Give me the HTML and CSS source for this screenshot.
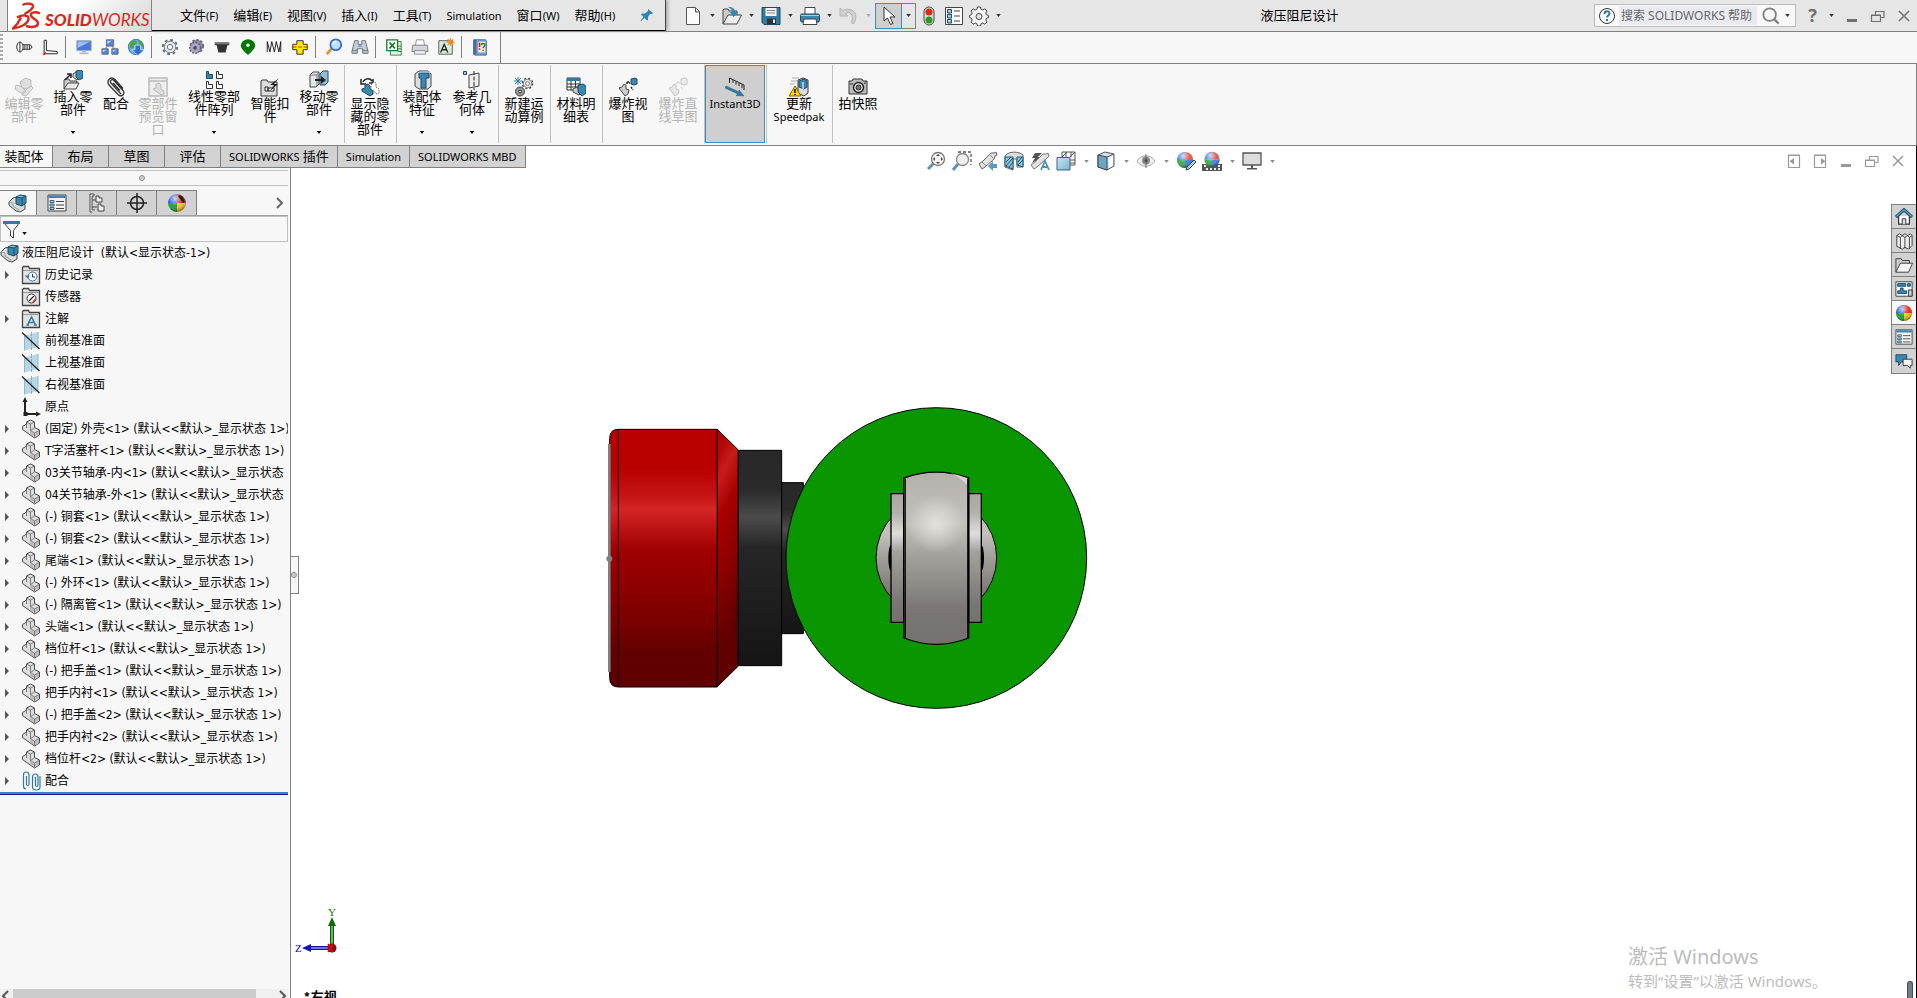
FILE: index.html
```
<!DOCTYPE html>
<html lang="zh-CN">
    <head>
        <meta charset="utf-8">
        <title>液压阻尼设计</title>
        <link rel="stylesheet" href="styles.css">
    </head>
    <body>
        <!-- shared icons -->
        <svg class="defs" aria-hidden="true">
            <defs>
                <linearGradient id="sky" x1="0" y1="0" x2="1" y2="1"><stop offset="0" stop-color="#cfe6f2"/><stop offset="1" stop-color="#7fb2cc"/></linearGradient>
                <radialGradient id="shine" cx=".4" cy=".25" r=".7"><stop offset="0" stop-color="#fff" stop-opacity=".75"/><stop offset=".6" stop-color="#fff" stop-opacity="0"/><stop offset="1" stop-color="#000" stop-opacity=".35"/></radialGradient>
            </defs>
            <symbol id="part" viewBox="0 0 20 20">
                <path d="M1.500 7.500l4-2.500V3l4-2 4 2v5.500l5 2.500v5l-5 3-12-8.500z" fill="#dedede" stroke="#4a4a4a" stroke-linejoin="round"/>
                <path d="M6 4l3.500 2v6l4 2.500L18 11.500V16l-4.500 2.500L9 15V6.500z" fill="#bdbdbd"/>
                <path d="M5.500 3l4 2 4-2M9.500 5v6.500l4 2.500 4.500-2.500M9.500 11.500l4-2.500M13.500 14v4.500M5.500 5v4" fill="none" stroke="#6a6a6a" stroke-width=".8"/>
            </symbol>
            <symbol id="asm" viewBox="0 0 20 20">
                <path d="M1 9l4-4 4-1 8 8v4l-5 3-4-1-7-6z" fill="#dcdcdc" stroke="#444"/>
                <path d="M1 9l4 1v3l6 4v2" fill="none" stroke="#999"/>
                <path d="M8 4l4-2 6 1v7l-4 3-6-2z" fill="#3a87b0" stroke="#1c4a63"/>
                <path d="M9 4l3-1 4 .6-2 1z" fill="#9fd0e8"/>
                <path d="M8 4l6 1 4-2M14 5v8" fill="none" stroke="#1c4a63"/>
            </symbol>
            <symbol id="plane" viewBox="0 0 20 20">
                <path d="M3.500 4.500L17 1v15L3.500 19.500z" fill="#b5d8e7"/>
                <path d="M3.500 4.500v15M17 1v15" stroke="#8fb9cb" fill="none"/>
                <path d="M10.500 1v18" stroke="#8a9aa2" stroke-dasharray="4 1" stroke-width=".8"/>
                <path d="M1 1.500L18.500 18" stroke="#222" stroke-width="1.300"/>
            </symbol>
            <symbol id="folder" viewBox="0 0 20 20">
                <path d="M1.500 18.500V2.500l1-1h5l1 2h10v15z" fill="#e2e2e2" stroke="#444" stroke-width="1.300"/>
                <path d="M2 5.500h16" stroke="#999"/>
            </symbol>
            <symbol id="caret" viewBox="0 0 6 4"><path d="M0 0h6L3 4z" fill="currentColor"/></symbol>
            <symbol id="ball" viewBox="0 0 20 20">
                <path d="M10 10V1a9 9 0 0 0-9 9z" fill="#2e5fd0"/>
                <path d="M10 10V1a9 9 0 0 1 9 9z" fill="#e03020"/>
                <path d="M10 10H1a9 9 0 0 0 9 9z" fill="#1fa03a"/>
                <path d="M10 10h9a9 9 0 0 1-9 9z" fill="#f2c81e"/>
                <circle cx="10" cy="10" r="9" fill="url(#shine)"/>
            </symbol>
            <symbol id="scene" viewBox="0 0 20 20">
                <path d="M10 10V1a9 9 0 0 0-9 9z" fill="#4a80e0"/>
                <path d="M10 10V1a9 9 0 0 1 9 9z" fill="#e05a50"/>
                <path d="M10 10H1a9 9 0 0 0 9 9z" fill="#3cae50"/>
                <path d="M10 10h9a9 9 0 0 1-9 9z" fill="#4a80e0"/>
                <circle cx="10" cy="10" r="9" fill="url(#shine)"/>
            </symbol>
            <symbol id="gear" viewBox="0 0 20 20">
                <circle cx="10" cy="10" r="8" fill="none" stroke="currentColor" stroke-width="2" stroke-dasharray="3.140 3.140"/>
                <circle cx="10" cy="10" r="6.500" fill="#e8e8e8" stroke="currentColor"/>
                <circle cx="10" cy="10" r="3" fill="#f7f7f7" stroke="currentColor"/>
            </symbol>
            <symbol id="list" viewBox="0 0 20 20">
                <path d="M1 2h18v16H1z" fill="#f4f4f4" stroke="#444"/>
                <path d="M1.500 2.500h17v2.500h-17z" fill="#3a87b0"/>
                <path d="M3 7.500h4v2H3zM3 11h4v2H3zM3 14.500h4v2H3z" fill="#9fd0e8" stroke="#1c4a63" stroke-width=".8"/>
                <path d="M9 8.500h8M9 12h8M9 15.500h8" stroke="#444"/>
            </symbol>
            <symbol id="min" viewBox="0 0 20 20"><path d="M5 13h10v3H5z" fill="currentColor"/></symbol>
            <symbol id="restore" viewBox="0 0 20 20"><path d="M7.500 9V5.500h8.500v6H12.500M7 5.500h9M3.500 9.500h9v6h-9zM3 9h10" fill="none" stroke="currentColor" stroke-width="1.200"/></symbol>
            <symbol id="close" viewBox="0 0 20 20"><path d="M5 5l10 10M15 5L5 15" stroke="currentColor" stroke-width="1.500"/></symbol>
        </svg>

        <header class="titlebar">
            <div class="brand">
                <svg class="ds" viewBox="0 0 30 28"><path d="M10.500 3c4-2 11-2 10.500 1.500-.5 3-4 5-8.500 7.500M5 15.500c5-3 12-3 11.500 1.500-.5 5-8 8.500-15.500 9.500 3.500-3 6-6.500 8-11M28 11.500c-4-2-9.500-1.500-9 2 .5 3 7.500 4.500 7 8-.5 4-7 4-12 2.500" fill="none" stroke="#da291c" stroke-width="2.400"/></svg>
                <span class="name"><b>SOLID</b>WORKS</span>
            </div>
            <nav class="menu">
                <a href="#">文件<span>(F)</span></a>
                <a href="#">编辑<span>(E)</span></a>
                <a href="#">视图<span>(V)</span></a>
                <a href="#">插入<span>(I)</span></a>
                <a href="#">工具<span>(T)</span></a>
                <a href="#"><span>Simulation</span></a>
                <a href="#">窗口<span>(W)</span></a>
                <a href="#">帮助<span>(H)</span></a>
                <button class="pin" aria-label="固定"><svg viewBox="0 0 14 14"><path d="M8 1l5 4-1 1h-2L8 9v3l-1 .5L4.500 10 1 13l-.5-.5L3.500 9 1 6.500 2 5.500h3L8 3z" fill="#2f86b5"/></svg></button>
            </nav>
            <div class="quick">
                <button aria-label="新建"><svg viewBox="0 0 20 20"><path d="M3.500 1.500h9l4 4v13h-13z" fill="#fbfbfb" stroke="#555"/><path d="M12.500 1.500v4.500h4" fill="#ddd" stroke="#555"/></svg></button>
                <button class="arrow" aria-label="更多"><svg><use href="#caret"/></svg></button>
                <button aria-label="打开"><svg viewBox="0 0 20 20"><path d="M1 18V4l1-1h4l1 2h8v4" fill="#ccc" stroke="#444"/><path d="M1 18l5-9h13.500L15 18z" fill="#eee" stroke="#444"/><path d="M6 1c5 0 7 2 7 5h3l-4.500 5L8 6h2.500C10.500 4 9 2.500 6 1z" fill="#2f86b5"/></svg></button>
                <button class="arrow" aria-label="更多"><svg><use href="#caret"/></svg></button>
                <button aria-label="保存"><svg viewBox="0 0 20 20"><path d="M1 1.500h18v17H3l-2-2z" fill="#2f7ba3" stroke="#1c4a63"/><path d="M4.500 2h11v8h-11z" fill="#f3f3f3"/><path d="M6 4.500h8M6 7h8" stroke="#888"/><path d="M6 12.500h9V18H6z" fill="#333"/><path d="M12 13.500h2V17h-2z" fill="#eee"/></svg></button>
                <button class="arrow" aria-label="更多"><svg><use href="#caret"/></svg></button>
                <button aria-label="打印"><svg viewBox="0 0 20 20"><path d="M5 8V1.500h10V8" fill="#fff" stroke="#444"/><rect x=".5" y="8" width="19" height="8" rx="1.500" fill="#3a87b0" stroke="#1c4a63"/><path d="M1 9.500h18" stroke="#9fd0e8"/><path d="M4 13h12l1 5.500H3z" fill="#fff" stroke="#444"/></svg></button>
                <button class="arrow" aria-label="更多"><svg><use href="#caret"/></svg></button>
                <button disabled aria-label="撤销"><svg viewBox="0 0 20 20"><path d="M1 2v8h8L6.500 7.500C11 5 15 8 12.500 17l2 1C21 8 13 0 4 4.500z" fill="#d0d0d0" stroke="#b4b4b4"/></svg></button>
                <button class="arrow" disabled aria-label="更多"><svg><use href="#caret"/></svg></button>
                <span class="split">
                    <button aria-label="选择"><svg viewBox="0 0 20 20"><path d="M5 1v14l3.500-3 3 6.500 2.500-1-3-6.500H16z" fill="#fff" stroke="#333"/></svg></button><button class="arrow" aria-label="更多"><svg><use href="#caret"/></svg></button>
                </span>
                <button aria-label="重建模型"><svg viewBox="0 0 20 20"><rect x="5" y="1" width="10" height="18" rx="5" fill="#ddd" stroke="#444"/><circle cx="10" cy="6" r="3.500" fill="#e02a10"/><circle cx="10" cy="14" r="3.500" fill="#2c9a22"/></svg></button>
                <button aria-label="文件属性"><svg viewBox="0 0 20 20"><path d="M1.500 1.500h17v17h-17z" fill="#fafafa" stroke="#444"/><path d="M3.500 3.500h4V7h-4zM3.500 8.500h4V12h-4zM3.500 13.500h4V17h-4z" fill="#9fd0e8" stroke="#1c4a63"/><path d="M10 5h6M10 10h6M10 15h6" stroke="#444"/></svg></button>
                <button aria-label="选项"><svg viewBox="0 0 20 20"><path d="M8.500 1h3l.6 2.300 1.700.7 2-1.200 2.200 2.200-1.200 2 .7 1.700 2 .8v2l-2 .8-.7 1.700 1.200 2-2.200 2.200-2-1.200-1.700.7-.6 2.300h-3l-.6-2.300-1.700-.7-2 1.200L2 16l1.200-2-.7-1.700-2-.8v-2l2-.8L3.200 7 2 5l2.200-2.200 2 1.200 1.700-.7z" fill="#f4f4f4" stroke="#444"/><circle cx="10" cy="10.500" r="3" fill="#e6e6e6" stroke="#444"/></svg></button>
                <button class="arrow" aria-label="更多"><svg><use href="#caret"/></svg></button>
            </div>
            <h1>液压阻尼设计</h1>
            <form class="search">
                <svg class="help" viewBox="0 0 20 20"><circle cx="10" cy="10" r="7.500" fill="#fff" stroke="#333"/><path d="M7.500 8c0-3.500 5-3.500 5-.5 0 2-2.500 2-2.500 4M10 13v2" fill="none" stroke="#2f7ba3" stroke-width="2"/></svg>
                <input type="text" placeholder="搜索 SOLIDWORKS 帮助" aria-label="搜索 SOLIDWORKS 帮助">
                <button type="button" class="glass" aria-label="搜索"><svg viewBox="0 0 20 20"><circle cx="8.500" cy="8.500" r="7" fill="none" stroke="#808080" stroke-width="2"/><path d="M13.500 13.500l5 5" stroke="#808080" stroke-width="2.500"/></svg></button>
                <button type="button" class="arrow" aria-label="更多"><svg><use href="#caret"/></svg></button>
            </form>
            <div class="winbtns">
                <button class="q" aria-label="帮助">?</button>
                <button class="arrow" aria-label="更多"><svg><use href="#caret"/></svg></button>
                <button aria-label="最小化"><svg><use href="#min"/></svg></button>
                <button aria-label="还原"><svg><use href="#restore"/></svg></button>
                <button aria-label="关闭"><svg><use href="#close"/></svg></button>
            </div>
        </header>

        <div class="tools">
            <div class="strip">
                <i class="grip"></i>
                <button aria-label="螺栓"><svg viewBox="0 0 20 20"><path d="M8 7.500h9l2 2.500-2 2.500H8" fill="#fff" stroke="#111"/><ellipse cx="5.500" cy="10" rx="3.500" ry="5.500" fill="#fff" stroke="#111"/><path d="M5.500 5v10M11 8v4M13.500 8v4M16 8v4" stroke="#111"/></svg></button>
                <button aria-label="折弯"><svg viewBox="0 0 20 20"><path d="M3.500 2.500H6V14l12 1v2.500H3.500z" fill="#fff" stroke="#111"/><path d="M2.500 19l3-3" stroke="red" stroke-width="1.500"/></svg></button>
                <i class="sep"></i>
                <button aria-label="显示器"><svg viewBox="0 0 20 20"><path d="M2 3h16v11H2z" fill="#4a78d8" stroke="#9ab"/><path d="M3 4h14L3 11z" fill="#9cc0f5"/><path d="M8 14h4v2h3v2H5v-2h3z" fill="#b8bcc8"/></svg></button>
                <button aria-label="网络"><svg viewBox="0 0 20 20"><path d="M7 9L4 13M12 9l4 4" stroke="#c8a040" stroke-width="1.500"/><path d="M6 2h8v7H6zM1 12h7v6H1zM12 12h7v6h-7z" fill="#4a84dc" stroke="#667"/><path d="M7 3h5L7 7zM2 13h4l-4 3zM13 13h4l-4 3z" fill="#b6d4f8"/></svg></button>
                <button aria-label="下载"><svg viewBox="0 0 20 20"><circle cx="10" cy="10" r="8.500" fill="#6fb0ea" stroke="#3b6fae"/><path d="M3 6c3-4 8-4 8-1s-3 2-3 4-3 4-5 2zM12 2c4 1 7 5 6 8l-4-2z" fill="#4aa648"/><path d="M9 8h6v5h4l-7 6.500L5.500 13H9z" fill="#2f6fd6" stroke="#fff" stroke-width=".6"/></svg></button>
                <i class="sep"></i>
                <button class="c-steel" aria-label="齿轮"><svg><use href="#gear"/></svg></button>
                <button aria-label="斜齿轮"><svg viewBox="0 0 20 20"><circle cx="11" cy="9" r="7" fill="#8d8aa6" stroke="#66637e" stroke-width="2" stroke-dasharray="2.500 2"/><circle cx="9" cy="11" r="6" fill="#a9a6bf" stroke="#5c5975" stroke-dasharray="2 1.500" stroke-width="1.500"/><circle cx="9" cy="11" r="2" fill="#4a4860"/></svg></button>
                <button aria-label="凸台"><svg viewBox="0 0 20 20"><path d="M2 5h16v3h-2l-2 8H6L4 8H2z" fill="#333"/><path d="M2 5h16v2H2z" fill="#777"/></svg></button>
                <button aria-label="凸轮"><svg viewBox="0 0 20 20"><path d="M10 19C5 14 2 11 2 8.500a8 7 0 0 1 16 0C18 11 15 14 10 19z" fill="#007800"/><circle cx="10" cy="8" r="2" fill="#fff"/></svg></button>
                <button aria-label="弹簧"><svg viewBox="0 0 20 20"><path d="M2.500 15.500V4l3 11.500 2-11.500 3 11.500 2-11.500 3 11.500L17.500 4v11.500" fill="none" stroke="#111"/></svg></button>
                <button aria-label="连接件"><svg viewBox="0 0 20 20"><path d="M6.500 3h7v4H18v6h-4.500v5h-7v-5H2V7h4.500z" fill="#ffe800" stroke="#222"/><path d="M1 10h5M8 10h4M14 10h5" stroke="#d02000"/></svg></button>
                <i class="sep"></i>
                <button aria-label="查找"><svg viewBox="0 0 20 20"><path d="M7 12l-5 6" stroke="#e09030" stroke-width="3"/><circle cx="12" cy="7.500" r="6" fill="#bfe0fb" stroke="#2f6fd0" stroke-width="2"/><path d="M8.500 7a4 4 0 0 1 4-3" stroke="#fff" stroke-width="1.500" fill="none"/></svg></button>
                <button aria-label="望远镜"><svg viewBox="0 0 20 20"><path d="M4 3h4v4h4V3h4l3 12v2h-6v-5H7v5H1v-2z" fill="#c3ccd6" stroke="#5d6c7c"/><path d="M1 14h6M13 14h6M8 9h4" stroke="#5d6c7c"/></svg></button>
                <i class="sep"></i>
                <button aria-label="Excel"><svg viewBox="0 0 20 20"><path d="M6 4h12v15H6z" fill="#e8f3e8" stroke="#2a7a36"/><path d="M14 9h4M14 12h4M14 15h4" stroke="#2a7a36"/><path d="M2 2h12v12H2z" fill="#fff" stroke="#1f7a30" stroke-width="1.500"/><path d="M5 5l6 6.500M11 5l-6 6.500" stroke="#1f7a30" stroke-width="2"/></svg></button>
                <button aria-label="打印机"><svg viewBox="0 0 20 20"><path d="M5 8l1-6h8l1 6" fill="#fff" stroke="#888"/><path d="M2 8h16l1 7H1z" fill="#d4d6dc" stroke="#777"/><path d="M4 14h12v4H4z" fill="#eef" stroke="#888"/></svg></button>
                <button aria-label="新建注释"><svg viewBox="0 0 20 20"><path d="M2 3h15v15H2z" fill="#d6ecdf" stroke="#555"/><path d="M4 16L8 7l4 9M5.500 13h5" fill="none" stroke="#222" stroke-width="1.500"/><path d="M15 0v9M10.500 4.500h9M12 1.500l6 6M18 1.500l-6 6" stroke="#f08a18" stroke-width="1.300"/></svg></button>
                <i class="sep"></i>
                <button aria-label="帮助手册"><svg viewBox="0 0 20 20"><path d="M3 2h13l1 1v16H4l-1-1z" fill="#7ca3d0" stroke="#3f5f8c"/><path d="M3 2h3v16H3z" fill="#456a9c"/><path d="M8 4h8v12H8z" fill="#f4ecd0"/><path d="M9.500 5v5M9.500 11.500v1.500" stroke="#d02010" stroke-width="1.800"/><path d="M11.500 8c0-2.500 4-2.500 4 0 0 1.500-2 1.500-2 3.500M13.500 13v1.500" stroke="#1c8040" stroke-width="1.500" fill="none"/></svg></button>
            </div>
        </div>

        <section class="ribbon">
            <div class="group">
                <button class="mid low" disabled><svg viewBox="0 0 20 20"><path d="M6 5l5-4 6 2v6l-4 3-5-1z" fill="#ddd" stroke="#bbb"/><path d="M2 8l4 1 6 5-3 3-8-5zM12 19l-4-1 1-3 8-6 2 2z" fill="#e4e4e4" stroke="#bbb"/></svg>编辑零<br>部件</button>
                <button><svg viewBox="0 0 20 20"><path d="M1 19v-9l1-1h4l1 2h7v3" fill="#ccc" stroke="#444"/><path d="M1 19l4-6h11l-3 6z" fill="#eee" stroke="#444"/><path d="M2 10L7 5M4 4h4v4" fill="none" stroke="#222" stroke-width="1.500"/><path d="M10 4l3-2 3 5-2 3-4-3z" fill="#ddd" stroke="#444"/><path d="M13 1l5-1 2 2v6l-4 2-3-3z" fill="#3a87b0" stroke="#1c4a63"/></svg>插入零<br>部件<i><svg><use href="#caret"/></svg></i></button>
                <button class="narrow low"><svg viewBox="0 0 20 20"><path d="M15 17L5 6c-2-2 1-4.500 3-2.500l9 10c3 4-2 7-5 4L3 8C0 3 5-1 9 2.500l8 9M14 13.500L7 6" fill="none" stroke="#333" stroke-width="1.300"/></svg>配合</button>
                <button class="mid low" disabled><svg viewBox="0 0 20 20"><path d="M1 1h18v18H1z" fill="#eee" stroke="#bbb" stroke-width="1.500"/><path d="M1 4h18" stroke="#bbb" stroke-width="1.500"/><path d="M5 12l3-1V7l3-1 2 2v4l3 2v3l-3 1z" fill="#ddd" stroke="#bbb"/></svg>零部件<br>预览窗<br>口</button>
                <button class="wide"><svg viewBox="0 0 20 20"><path d="M2.500 1.500h2v3h4v4h-6z" fill="#3a87b0" stroke="#1c4a63"/><path d="M12.500 1.500h2v3h4v4h-6zM2.500 11.500h2v3h4v4h-6zM12.500 11.500h2v3h4v4h-6z" fill="#fff" stroke="#333"/></svg>线性零部<br>件阵列<i><svg><use href="#caret"/></svg></i></button>
                <button class="mid low"><svg viewBox="0 0 20 20"><path d="M1 19V4l1-1h5l1 2h9v14z" fill="#ddd" stroke="#333"/><path d="M5 10h3v4H5zM8 11h6v3H8z" fill="#fff" stroke="#222"/><path d="M19 1l-9 7h4l-4 6 8-7h-4z" fill="#222"/></svg>智能扣<br>件</button>
                <button><svg viewBox="0 0 20 20"><path d="M1 5l3-3h6v12l-3 3H1z" fill="#e4e4e4" stroke="#444"/><path d="M1 5h7l2-3M8 5v11" fill="none" stroke="#777"/><path d="M11 4l3-3h5v11l-3 3h-5z" fill="#8fc0d8" stroke="#1c4a63"/><path d="M6 10h7" stroke="#222" stroke-width="2"/><path d="M12 6l5 4-5 4z" fill="#222"/></svg>移动零<br>部件<i><svg><use href="#caret"/></svg></i></button>
            </div>
            <div class="group">
                <button class="low"><svg viewBox="0 0 20 20"><path d="M3 5C5 1 10 1 12 4M1 2v5h5M13 2v4H9" fill="none" stroke="#222" stroke-width="1.500"/><path d="M2 12l3-1V8l3-1 2 2v3l3 2v3l-3 2-8-5z" fill="#3a87b0" stroke="#1c4a63"/><path d="M11 8l3-3 2 1v4l3 2v4l-3 1-2-3-3-2z" fill="#fff" stroke="#666" stroke-dasharray="1.500 1"/></svg>显示隐<br>藏的零<br>部件</button>
            </div>
            <div class="group">
                <button><svg viewBox="0 0 20 20"><path d="M3 4l4-3h9l3 3v12l-3 3H7l-4-3z" fill="#ddd" stroke="#444"/><path d="M7 3h10v5h-3v10H9V8H7z" fill="#3a87b0" stroke="#1c4a63"/><path d="M7 3l2-1h9l-1 1" stroke="#9fd0e8" fill="none"/></svg>装配体<br>特征<i><svg><use href="#caret"/></svg></i></button>
                <button><svg viewBox="0 0 20 20"><path d="M1.500 1.500h3v3h-3z" fill="#9fd0e8" stroke="#1c4a63"/><path d="M7 5l10-2v13L7 18z" fill="#f0f0f0" stroke="#444"/><path d="M12 1v19" stroke="#222" stroke-dasharray="4 1.500"/></svg>参考几<br>何体<i><svg><use href="#caret"/></svg></i></button>
            </div>
            <div class="group">
                <button class="low"><svg class="c-dark" viewBox="0 0 20 20"><path d="M4 0v8M0 4h8M1 1l6 6M7 1L1 7" stroke="#2f7ba3"/><use href="#gear" x="7" y="0" width="13" height="13"/><circle cx="6" cy="14.500" r="4.500" fill="#999" stroke="#444"/><circle cx="6" cy="14.500" r="1.500" fill="#ddd" stroke="#333"/></svg>新建运<br>动算例</button>
            </div>
            <div class="group">
                <button class="low"><svg viewBox="0 0 20 20"><path d="M1 1h13v12H1z" fill="#fff" stroke="#333"/><path d="M1 1h13v3H1z" fill="#2f7ba3"/><path d="M1 7h13M1 10h13M5 4v9M9.500 4v9" stroke="#333"/><path d="M7 12l4-2 4 6-2 2-6-3z" fill="#ccc" stroke="#444"/><path d="M12 8l5-1 3 2v7l-4 3-4-4z" fill="#3a87b0" stroke="#1c4a63"/></svg>材料明<br>细表</button>
            </div>
            <div class="group">
                <button class="low"><svg viewBox="0 0 20 20"><path d="M1 11l3-1 2-3 2 1v4l3 1-1 4-3 2z" fill="#ccc" stroke="#444"/><path d="M13 2l4-1 2 1v5l-3 1-3-1z" fill="#3a87b0" stroke="#1c4a63"/><path d="M8 6h4M13 10l2 3M10 4v2" stroke="#222" stroke-dasharray="2 1" stroke-width="1.500"/></svg>爆炸视<br>图</button>
                <button class="low" disabled><svg viewBox="0 0 20 20"><path d="M1 11l3-1 2-3 2 1v4l3 1-1 4-3 2z" fill="#e8e8e8" stroke="#c4c4c4"/><path d="M13 2l4-1 2 1v5l-3 1-3-1z" fill="#eee" stroke="#c4c4c4"/><path d="M8 6h4M13 10l2 3M10 4v2" stroke="#c4c4c4" stroke-dasharray="2 1"/></svg>爆炸直<br>线草图</button>
            </div>
            <div class="group">
                <button class="low active"><svg viewBox="0 0 20 20"><path d="M4.500 6V1L19 8v5M8 3v3M11 4.500v3M14 6v3M17 7.500V11" fill="none" stroke="#222"/><path d="M1 9l13 6v-2l5 6-8-.5 2-1.500L0 11z" fill="#2f7ba3" stroke="#1c5a7d" stroke-width=".5"/></svg><span class="en">Instant3D</span></button>
            </div>
            <div class="group">
                <button class="low wide"><svg viewBox="0 0 20 20"><path d="M3 1h7M2 4h6M1 7h5" stroke="#aaa"/><path d="M9 3l5-2 5 2v13l-4 3-6-3z" fill="#ddd" stroke="#333"/><path d="M10 4l5-2 3 2v6l-3 2-5-2z" fill="#3a87b0" stroke="#1c4a63"/><path d="M14 5v7" stroke="#fff"/><path d="M6 9l6 10H0z" fill="#ffd400" stroke="#8a5a00"/><path d="M6 12v4M6 17v1.200" stroke="#111" stroke-width="1.500"/></svg>更新<br><span class="en">Speedpak</span></button>
            </div>
            <div class="group">
                <button class="low"><svg viewBox="0 0 20 20"><path d="M1 4h3l1-2h9l1 2h4v13H1z" fill="#bbb" stroke="#333"/><path d="M2 7h3M16 6h2" stroke="#333"/><circle cx="10.500" cy="10.500" r="5" fill="#eee" stroke="#222" stroke-width="1.500"/><circle cx="10.500" cy="10.500" r="2.500" fill="#777" stroke="#222"/></svg>拍快照</button>
            </div>
        </section>

        <main>
            <nav class="tabs">
                <a class="on" href="#">装配体</a>
                <a href="#">布局</a>
                <a href="#">草图</a>
                <a href="#">评估</a>
                <a href="#"><span class="en">SOLIDWORKS</span> 插件</a>
                <a href="#"><span class="en">Simulation</span></a>
                <a href="#"><span class="en">SOLIDWORKS MBD</span></a>
            </nav>

            <aside class="panel">
                <div class="drag"><i class="dot"></i></div>
                <div class="ptabs">
                    <button class="on" aria-label="设计树"><svg><use href="#asm"/></svg></button>
                    <button aria-label="属性"><svg><use href="#list"/></svg></button>
                    <button aria-label="配置"><svg viewBox="0 0 20 20"><path d="M5.500 19H3V1h4v2H5v14h3" fill="#fff" stroke="#444"/><path d="M5 7h4M5 14h5" stroke="#444"/><path d="M9 3h3v2h3v4H9zM11 11h3v2h3v5h-6z" fill="#f2f2f2" stroke="#444"/></svg></button>
                    <button aria-label="尺寸"><svg viewBox="0 0 20 20"><circle cx="10" cy="10" r="6.500" fill="none" stroke="#222" stroke-width="1.500"/><path d="M10 0v20M0 10h20" stroke="#222" stroke-width="1.500"/></svg></button>
                    <button aria-label="外观"><svg viewBox="0 0 20 20"><use href="#ball"/><path d="M11 3l5 7 2-1c-1-4-3-6-5-7z" fill="#222"/></svg></button>
                    <button class="more" aria-label="展开"><svg viewBox="0 0 10 12"><path d="M2 1l5 5-5 5" fill="none" stroke="#666" stroke-width="2"/></svg></button>
                </div>
                <button class="filter" aria-label="过滤器"><svg viewBox="0 0 20 20"><path d="M1.500 3.500h16l-6 8V19l-3-2v-5.500z" fill="#f4f4f4" stroke="#444"/><path d="M1 2h17v3H1z" fill="#2f7ba3"/></svg><svg class="car"><use href="#caret"/></svg></button>
                <ul class="tree">
                    <li class="root"><svg><use href="#asm"/></svg>液压阻尼设计&nbsp; (默认&lt;显示状态-1&gt;)</li>
                    <li class="sub"><svg viewBox="0 0 20 20"><use href="#folder"/><circle cx="11.500" cy="11.500" r="4.500" fill="#fff" stroke="#2f7ba3"/><path d="M11.500 9v3h2.500" fill="none" stroke="#333"/><path d="M4 10.500h5l-2.500 3z" fill="#2f7ba3"/></svg>历史记录</li>
                    <li><svg viewBox="0 0 20 20"><use href="#folder"/><circle cx="10.500" cy="11.500" r="4.500" fill="#fff" stroke="#333"/><path d="M8 14l5-5" stroke="#222" stroke-width="1.300"/><path d="M11 15.500a4.500 4.500 0 0 0 4-4l-2 1z" fill="#e02a10"/></svg>传感器</li>
                    <li class="sub"><svg viewBox="0 0 20 20"><use href="#folder"/><path d="M6.500 16L10.500 8l4 8M8 13.500h5M5.500 16h2.500M13 16h3" fill="none" stroke="#2f7ba3" stroke-width="1.500"/></svg>注解</li>
                    <li><svg><use href="#plane"/></svg>前视基准面</li>
                    <li><svg><use href="#plane"/></svg>上视基准面</li>
                    <li><svg><use href="#plane"/></svg>右视基准面</li>
                    <li><svg viewBox="0 0 20 20"><path d="M4 4v13h12" fill="none" stroke="#222" stroke-width="2"/><path d="M1.500 5L4 0l2.500 5zM15 14.500l5 2.500-5 2.500zM2.500 15h4v4h-4z" fill="#222"/></svg>原点</li>
                    <li class="sub"><svg><use href="#part"/></svg>(固定) 外壳&lt;1&gt; (默认&lt;&lt;默认&gt;_显示状态 1&gt;)</li>
                    <li class="sub"><svg><use href="#part"/></svg>T字活塞杆&lt;1&gt; (默认&lt;&lt;默认&gt;_显示状态 1&gt;)</li>
                    <li class="sub"><svg><use href="#part"/></svg>03关节轴承-内&lt;1&gt; (默认&lt;&lt;默认&gt;_显示状态</li>
                    <li class="sub"><svg><use href="#part"/></svg>04关节轴承-外&lt;1&gt; (默认&lt;&lt;默认&gt;_显示状态</li>
                    <li class="sub"><svg><use href="#part"/></svg>(-) 铜套&lt;1&gt; (默认&lt;&lt;默认&gt;_显示状态 1&gt;)</li>
                    <li class="sub"><svg><use href="#part"/></svg>(-) 铜套&lt;2&gt; (默认&lt;&lt;默认&gt;_显示状态 1&gt;)</li>
                    <li class="sub"><svg><use href="#part"/></svg>尾端&lt;1&gt; (默认&lt;&lt;默认&gt;_显示状态 1&gt;)</li>
                    <li class="sub"><svg><use href="#part"/></svg>(-) 外环&lt;1&gt; (默认&lt;&lt;默认&gt;_显示状态 1&gt;)</li>
                    <li class="sub"><svg><use href="#part"/></svg>(-) 隔离管&lt;1&gt; (默认&lt;&lt;默认&gt;_显示状态 1&gt;)</li>
                    <li class="sub"><svg><use href="#part"/></svg>头端&lt;1&gt; (默认&lt;&lt;默认&gt;_显示状态 1&gt;)</li>
                    <li class="sub"><svg><use href="#part"/></svg>档位杆&lt;1&gt; (默认&lt;&lt;默认&gt;_显示状态 1&gt;)</li>
                    <li class="sub"><svg><use href="#part"/></svg>(-) 把手盖&lt;1&gt; (默认&lt;&lt;默认&gt;_显示状态 1&gt;)</li>
                    <li class="sub"><svg><use href="#part"/></svg>把手内衬&lt;1&gt; (默认&lt;&lt;默认&gt;_显示状态 1&gt;)</li>
                    <li class="sub"><svg><use href="#part"/></svg>(-) 把手盖&lt;2&gt; (默认&lt;&lt;默认&gt;_显示状态 1&gt;)</li>
                    <li class="sub"><svg><use href="#part"/></svg>把手内衬&lt;2&gt; (默认&lt;&lt;默认&gt;_显示状态 1&gt;)</li>
                    <li class="sub"><svg><use href="#part"/></svg>档位杆&lt;2&gt; (默认&lt;&lt;默认&gt;_显示状态 1&gt;)</li>
                    <li class="sub"><svg viewBox="0 0 20 20"><path d="M5.500 5v8c0 2 2.500 2 2.500 0V4c0-4-5.500-4-5.500 0v11c0 2 1 3 2.500 3M14.500 6v8c0 2 2.500 2 2.500 0V6c0-4-5.500-4-5.500 0v10c0 4 7.500 4 7.500 0V5" fill="none" stroke="#2f7ba3" stroke-width="1.200"/></svg>配合</li>
                </ul>
                <div class="hbar">
                    <svg viewBox="0 0 10 12"><path d="M8 2L3 7l5 5" fill="none" stroke="#555" stroke-width="2"/></svg>
                    <i></i>
                    <svg viewBox="0 0 10 12"><path d="M2 2l5 5-5 5" fill="none" stroke="#555" stroke-width="2"/></svg>
                </div>
            </aside>

            <section class="viewport">
                <div class="viewbar">
                    <div class="hud">
                        <button aria-label="整屏显示"><svg viewBox="0 0 20 20"><path d="M8 12l-6 6" stroke="#5a96b4" stroke-width="3"/><circle cx="12" cy="8" r="6.500" fill="#f4f4f4" stroke="#777" stroke-width="1.300"/><path d="M12 3l2 2h-4zM12 13l2-2h-4zM7 8l2-2v4zM17 8l-2-2v4z" fill="#444"/></svg></button>
                        <button aria-label="局部放大"><svg viewBox="0 0 20 20"><path d="M6 1h13v13" fill="none" stroke="#555" stroke-dasharray="3 2" stroke-width="1.300"/><path d="M6 13l-5 6" stroke="#5a96b4" stroke-width="3"/><circle cx="10.500" cy="8.500" r="6" fill="#eee" stroke="#888" stroke-width="1.300"/></svg></button>
                        <button aria-label="上一视图"><svg viewBox="0 0 20 20"><path d="M1 13l4-3 8-8h3l2-1 1 3-2 1-1 3-9 8-3 2z" fill="#e2e2e2" stroke="#666"/><path d="M4 11l4 4M12 4l3 3" stroke="#888"/><path d="M19 13v4h-4v3l-5-5 5-5v3z" fill="#5a9cbf"/></svg></button>
                        <button aria-label="剖面视图"><svg viewBox="0 0 20 20"><path d="M1 5c3-5 14-5 18-1v12h-6V8h-4v11L1 16z" fill="#ddd" stroke="#666"/><path d="M1 6h8v12l-8-3zM13 6h6v10l-6-2z" fill="#8fc0d8" stroke="#1c5a7d"/><path d="M2 11l5-5M2 15l7-8M5 16l4-5M14 11l4-5M14 14l5-5" stroke="#1c5a7d"/></svg></button>
                        <button aria-label="动态注解"><svg viewBox="0 0 20 20"><path d="M5 2h7l-4 4h5L2 12l3-5H2z" fill="#555"/><path d="M1 14l4-3 8-8h3l2-1 1 3-3 3-9 8-3 2z" fill="#e2e2e2" stroke="#777"/><path d="M11 19l4-9 4 9M12.500 16h5" fill="none" stroke="#4b94b8" stroke-width="1.800"/></svg></button>
                        <button aria-label="视图定向"><svg viewBox="0 0 20 20"><path d="M6 6V1h13v13h-5M6 6l5-5M19 1l-5 5M10 1v5M15 1v5M14 9h5M14 12h5" fill="none" stroke="#555"/><path d="M1 6.500h13V19H1z" fill="url(#sky)" stroke="#2f6a88"/></svg></button>
                        <button class="arrow" aria-label="更多"><svg><use href="#caret"/></svg></button>
                        <button aria-label="显示样式"><svg viewBox="0 0 20 20"><path d="M2 4l7-3 9 2v12l-7 4-9-3z" fill="#cfe6f2" stroke="#555"/><path d="M2 4l9 2v13l-9-3z" fill="#6aa6c4" stroke="#444"/><path d="M11 6l7-3" stroke="#555"/><path d="M13 6.500l4-2v10l-4 2z" fill="#fff"/></svg></button>
                        <button class="arrow" aria-label="更多"><svg><use href="#caret"/></svg></button>
                        <button aria-label="隐藏项目"><svg viewBox="0 0 20 20"><path d="M1 10c4-7 14-7 18 0-4 7-14 7-18 0z" fill="#eee" stroke="#aaa"/><circle cx="10" cy="9.500" r="4" fill="#888"/><circle cx="10" cy="9.500" r="1.500" fill="#444"/><path d="M10 3v14" stroke="#555" stroke-width=".8"/></svg></button>
                        <button class="arrow" aria-label="更多"><svg><use href="#caret"/></svg></button>
                        <button aria-label="编辑外观"><svg viewBox="0 0 20 20"><use href="#scene" width="18" height="18"/><path d="M18 9l2 2-7 7-3 1 1-3z" fill="#a8d4ea" stroke="#2a4a5c"/></svg></button>
                        <button aria-label="应用布景"><svg viewBox="0 0 20 20"><path d="M0 13h20v7H0z" fill="#555"/><path d="M2 14h2v2H2zM16 14h2v2h-2zM4 17h2v2H4zM8 17h2v2H8zM12 17h2v2h-2zM16 17h2v2h-2z" fill="#eee"/><use href="#scene" x="1" y="0" width="18" height="17"/></svg></button>
                        <button class="arrow" aria-label="更多"><svg><use href="#caret"/></svg></button>
                        <button aria-label="视图设定"><svg viewBox="0 0 20 20"><path d="M1 2h18v12H1z" fill="#ddd" stroke="#555" stroke-width="1.300"/><path d="M9 14h2v3h4v1.500H5V17h4z" fill="#555"/></svg></button>
                        <button class="arrow" aria-label="更多"><svg><use href="#caret"/></svg></button>
                    </div>
                    <div class="docbtns">
                        <button aria-label="左侧窗格"><svg viewBox="0 0 20 20"><path d="M4.500 4h11v12.500h-11zM4 4.500h12" fill="none" stroke="currentColor" stroke-width="1.200"/><path d="M10 7v6.500l-4.500-3.200z" fill="currentColor"/></svg></button>
                        <button aria-label="右侧窗格"><svg viewBox="0 0 20 20"><path d="M4.500 4h11v12.500h-11zM4 4.500h12" fill="none" stroke="currentColor" stroke-width="1.200"/><path d="M11 7v6.500l4.500-3.200z" fill="currentColor"/></svg></button>
                        <button aria-label="最小化"><svg><use href="#min"/></svg></button>
                        <button aria-label="还原"><svg><use href="#restore"/></svg></button>
                        <button aria-label="关闭"><svg><use href="#close"/></svg></button>
                    </div>
                </div>

                <button class="handle" aria-label="收起面板"><i class="dot"></i></button>

                <!-- 3D model, right view -->
                <svg class="model" viewBox="0 0 1560 990">
                    <defs>
                        <linearGradient id="red" x1="0" y1="0" x2="0" y2="1"><stop offset="0" stop-color="#b80000"/><stop offset=".15" stop-color="#b80000"/><stop offset=".25" stop-color="#c41212"/><stop offset=".31" stop-color="#d42424"/><stop offset=".38" stop-color="#bd1414"/><stop offset=".47" stop-color="#a00000"/><stop offset=".7" stop-color="#820000"/><stop offset=".87" stop-color="#620000"/><stop offset="1" stop-color="#600000"/></linearGradient>
                        <linearGradient id="cone" x1="0" y1="0" x2=".15" y2="1"><stop offset="0" stop-color="#b40000"/><stop offset=".1" stop-color="#b60606"/><stop offset=".2" stop-color="#c81c1c"/><stop offset=".35" stop-color="#a80000"/><stop offset=".6" stop-color="#8a0000"/><stop offset=".85" stop-color="#620000"/><stop offset="1" stop-color="#600000"/></linearGradient>
                        <linearGradient id="black" x1="0" y1="0" x2="0" y2="1"><stop offset="0" stop-color="#282828"/><stop offset=".18" stop-color="#2a2a2a"/><stop offset=".31" stop-color="#4b4b4b"/><stop offset=".45" stop-color="#262626"/><stop offset="1" stop-color="#151515"/></linearGradient>
                        <linearGradient id="steel" x1="0" y1="0" x2="0" y2="1"><stop offset="0" stop-color="#b4b0ac"/><stop offset=".3" stop-color="#c4c1bd"/><stop offset=".5" stop-color="#a29f9a"/><stop offset=".8" stop-color="#7b7673"/><stop offset="1" stop-color="#75716f"/></linearGradient>
                        <linearGradient id="collar" x1="0" y1="0" x2="0" y2="1"><stop offset="0" stop-color="#aaa6a2"/><stop offset=".15" stop-color="#b4b1ad"/><stop offset=".31" stop-color="#e0dedb"/><stop offset=".45" stop-color="#a5a29d"/><stop offset=".85" stop-color="#7a7673"/><stop offset="1" stop-color="#75716f"/></linearGradient>
                        <radialGradient id="spot"><stop offset="0" stop-color="#e4e1dd"/><stop offset="1" stop-color="#e4e1dd" stop-opacity="0"/></radialGradient>
                    </defs>
                    <path d="M382 118l63 62v648l-63 62z" fill="url(#cone)" stroke="#000" stroke-width="3"/>
                    <path d="M85 118h297v773H85q-26 0-26-28V146q0-28 26-28z" fill="url(#red)" stroke="#000" stroke-width="3"/>
                    <path d="M85 118v773M382 118v773" stroke="#1a0000" stroke-width="3"/>
                    <path d="M58 162v684" stroke="#808080" stroke-width="8"/>
                    <circle cx="58" cy="506" r="9" fill="#808080"/>
                    <path d="M445 181h130v646H445z" fill="url(#black)" stroke="#000" stroke-width="3"/>
                    <path d="M575 278h65v453h-65z" fill="url(#black)" stroke="#000" stroke-width="3"/>
                    <circle cx="1039" cy="504" r="451" fill="#0a9600" stroke="#000" stroke-width="3"/>
                    <circle cx="1039" cy="503" r="181" fill="url(#steel)" stroke="#000" stroke-width="3"/>
                    <ellipse cx="903" cy="504" rx="8" ry="38"/>
                    <ellipse cx="1174" cy="504" rx="8" ry="38"/>
                    <path d="M903 311h38v386h-38zM1136 311h38v386h-38z" fill="url(#collar)" stroke="#000" stroke-width="4"/>
                    <path d="M942 264q97-35 194 0v480q-97 38-194 0z" fill="url(#steel)" stroke="#000" stroke-width="4"/>
                    <path d="M1080 249q30 6 52 15v22q-20-24-52-37z" fill="#e4e1dd" opacity=".7"/>
                    <circle cx="1039" cy="401" r="86" fill="url(#spot)"/>
                    <path d="M946 266v478M1133 266v478" stroke="#000" stroke-width="3"/>
                </svg>

                <svg class="triad" viewBox="0 0 46 54">
                    <text x="33" y="11" fill="#007800">Y</text>
                    <text x="0" y="47" fill="#0000e0">Z</text>
                    <path d="M35.500 20h3v24h-3z" fill="#6eb06e" stroke="#0c5c0c"/>
                    <path d="M37 12l4 9h-8z" fill="#0c6c0c"/>
                    <path d="M14 41.500h22v3H14z" fill="#7070f0" stroke="#14147c"/>
                    <path d="M7 43l9-4v8z" fill="#1414c0"/>
                    <circle cx="37" cy="43" r="4.500" fill="#801010"/>
                    <path d="M33 39l5 8M38 39l-5 8" stroke="#f00000" stroke-width="1.500"/>
                </svg>
                <span class="viewname">*右视</span>

                <div class="taskpane">
                    <button aria-label="资源"><svg viewBox="0 0 20 20"><path d="M4 9v9h12V9" fill="#fff" stroke="#333" stroke-width="1.300"/><path d="M8 18v-6h4v6" fill="#ddd" stroke="#333"/><path d="M1 10l9-8 9 8" fill="none" stroke="#1c4a63" stroke-width="3.600"/><path d="M1.500 9.500L10 2l8.500 7.500" fill="none" stroke="#5aa4c8" stroke-width="1.500"/></svg></button>
                    <button aria-label="设计库"><svg viewBox="0 0 20 20"><path d="M2 4l3-2 3 2 3-2 3 2 3-2 2 2v11l-4 4-4-2-3 2-6-3z" fill="#eee" stroke="#333"/><path d="M2 4l4 2v12M8 4l3 2v12M14 4l2 2v12M6 6l2-2M11 6l3-2M16 6l3-2" fill="none" stroke="#333"/></svg></button>
                    <button aria-label="文件"><svg viewBox="0 0 20 20"><path d="M1 18V3h6l1 2h8v3" fill="#ccc" stroke="#333"/><path d="M1 18L6 8h13.500L15 18z" fill="#f4f4f4" stroke="#333"/></svg></button>
                    <button aria-label="视图调色板"><svg viewBox="0 0 20 20"><path d="M1 2h18v16H1z" fill="#fff" stroke="#333"/><path d="M3 4h9v3H3zM14 4h3v3h-3zM6 9h3v3h4v3H3v-3h3z" fill="#3a87b0" stroke="#1c4a63"/><path d="M15 11h4v7h-4z" fill="#ccc" stroke="#333"/></svg></button>
                    <button class="on" aria-label="外观"><svg><use href="#ball"/></svg></button>
                    <button aria-label="自定义属性"><svg><use href="#list"/></svg></button>
                    <button aria-label="论坛"><svg viewBox="0 0 20 20"><path d="M1 3h12v8H7l-3 4v-4H1z" fill="#3a87b0" stroke="#1c4a63"/><path d="M9 8h10v7h-2v3l-3-3H9z" fill="#f4f4f4" stroke="#333"/></svg></button>
                </div>

                <div class="watermark">
                    <p class="big">激活 Windows</p>
                    <p>转到“设置”以激活 Windows。</p>
                </div>
                <i class="thumb"></i>
            </section>
        </main>
    </body>
</html>
```
FILE: styles.css
```
* {
    box-sizing: border-box;
}
body {
    margin: 0;
    height: 100vh;
    overflow: hidden;
    display: flex;
    flex-direction: column;
    background: #f7f7f7;
    color: #000;
    font-family: "Noto Sans", "Noto Sans CJK SC", sans-serif;
    font-size: 13px;
    line-height: 13px;
}
button, input {
    font: inherit;
    color: inherit;
    border: 0;
    padding: 0;
    margin: 0;
    background: none;
}
button {
    flex: none;
    display: flex;
    align-items: center;
    justify-content: center;
}
a {
    color: inherit;
    text-decoration: none;
    white-space: nowrap;
}
svg {
    flex: none;
    width: 20px;
    height: 20px;
}
.defs {
    position: absolute;
    width: 0;
    height: 0;
}
.en {
    font-size: 11px;
}
.arrow {
    width: 15px;
    color: #333;
}
.arrow svg {
    width: 5px;
    height: 3px;
}
.arrow:disabled {
    color: #aaa;
}

/* title bar */
.titlebar {
    flex: none;
    display: flex;
    height: 32px;
    background: #e6e6e6;
    border-bottom: 1px solid #808080;
}
.brand {
    display: flex;
    align-items: center;
    width: 145px;
    margin-left: 7px;
    padding-left: 4px;
    border-left: 1px solid #808080;
    border-right: 1px solid #808080;
    background: linear-gradient(135deg, #fff 40%, #d8d8d8);
}
.ds {
    width: 30px;
    height: 28px;
}
.name {
    padding: 8px 0 0 3px;
    color: #da291c;
    font-family: Lato, sans-serif;
    font-size: 17px;
    font-style: italic;
    font-weight: 400;
}
.name b {
    font-weight: 900;
}
.menu {
    display: flex;
    align-items: center;
    gap: 15px;
    width: 514px;
    padding-left: 28px;
    border-bottom: 1px solid #000;
    border-right: 1px solid #444;
    box-shadow: 2px 0 3px #aaa;
}
.menu span {
    font-size: 11px;
}
.pin {
    margin-left: 10px;
}
.pin svg {
    width: 14px;
    height: 14px;
}
.quick {
    display: flex;
    align-items: center;
    padding-left: 14px;
}
.quick button {
    width: 25px;
}
.quick svg {
    width: 20px;
    height: 20px;
}
.quick .arrow {
    width: 14px;
}
.quick .arrow svg {
    width: 5px;
    height: 3px;
}
.split {
    display: flex;
    height: 26px;
    border: 1px solid #808080;
}
.quick .split button:first-child {
    background: #cfcfcf;
    outline: 1px solid #3f8db8;
}
.split button {
    height: 24px;
}
h1 {
    flex: 1;
    margin: 0;
    text-align: center;
    font-size: 13px;
    font-weight: normal;
    line-height: 31px;
    white-space: nowrap;
}
.search {
    display: flex;
    align-items: center;
    width: 202px;
    height: 23px;
    margin-top: 4px;
    background: #f8f8f8;
    border: 1px solid #bbb;
}
.help {
    margin: 0 2px;
}
.search input {
    flex: 1;
    min-width: 0;
    height: 19px;
    padding-left: 2px;
    background: #eaebf1;
    font-size: 12px;
}
.search input::placeholder {
    color: #666;
    opacity: 1;
}
.glass {
    margin-left: 5px;
}
.glass svg {
    width: 18px;
    height: 18px;
}
.winbtns, .docbtns {
    display: flex;
    align-items: center;
    color: #707070;
}
.winbtns {
    margin-left: 5px;
}
.winbtns button, .docbtns button {
    width: 26px;
}
.winbtns .q {
    width: 23px;
    font-size: 18px;
    font-weight: bold;
}
.winbtns .arrow {
    width: 15px;
}

/* macro toolbar */
.tools {
    flex: none;
    height: 32px;
    border-bottom: 1px solid #808080;
}
.strip {
    display: flex;
    align-items: center;
    width: 501px;
    height: 31px;
    padding-bottom: 1px;
    border-right: 1px solid #808080;
}
.grip {
    width: 3px;
    height: 26px;
    margin-right: 8px;
    background: repeating-linear-gradient(#aaa 0 2px, #f7f7f7 2px 4px);
}
.strip button {
    width: 26px;
}
.strip svg {
    width: 18px;
    height: 18px;
}
.sep {
    width: 1px;
    height: 22px;
    margin: 0 5px 0 2px;
    background: #808080;
}
.c-steel {
    color: #5d6c7c;
}
.c-dark {
    color: #444;
}

/* ribbon */
.ribbon {
    flex: none;
    display: flex;
    height: 82px;
    padding: 1px 0 2px;
    border-right: 1px solid #808080;
    border-bottom: 1px solid #808080;
}
.group {
    display: flex;
    padding-right: 1px;
    border-right: 1px solid #c0c0c0;
}
.group:last-child {
    border: 0;
}
.group button {
    flex-direction: column;
    justify-content: flex-start;
    width: 50px;
    padding-top: 5px;
}
.group:first-child {
    padding: 0;
}
.group .mid {
    width: 48px;
}
.group .narrow {
    width: 36px;
}
.group .wide {
    width: 64px;
}
.group .low {
    padding-top: 12px;
}
.group button:disabled {
    color: #b4b4b4;
}
.group i {
    margin-top: auto;
    padding-bottom: 9px;
    display: flex;
}
.group i svg {
    width: 6px;
    height: 3px;
}
.group .active {
    width: 60px;
    background: #cfcfcf;
    border: 1px solid #3f8db8;
    padding-top: 11px;
}

/* document area */
main {
    flex: 1;
    min-height: 0;
    display: grid;
    grid-template-columns: 291px 1fr;
    grid-template-rows: 22px 1fr;
}
.tabs {
    grid-area: 1 / 1 / 2 / 3;
    justify-self: start;
    z-index: 1;
    display: flex;
    border-bottom: 1px solid #808080;
}
.tabs a {
    min-width: 56px;
    padding: 4px 8px 0;
    background: #d2d2d2;
    border-right: 1px solid #808080;
    text-align: center;
}
.tabs .on {
    min-width: 53px;
    padding: 4px 4px 0 0;
    background: #f7f7f7;
}

/* left panel */
.panel {
    grid-area: 2 / 1 / 3 / 2;
    min-height: 0;
    display: flex;
    flex-direction: column;
    padding-right: 2px;
    border-right: 1px solid #808080;
}
.drag {
    display: flex;
    justify-content: center;
    align-items: center;
    height: 16px;
    margin: 2px 0 4px;
    padding-right: 4px;
    border-top: 1px solid #c0c0c0;
    border-bottom: 1px solid #c0c0c0;
}
.dot {
    width: 6px;
    height: 6px;
    border: 1px solid #909090;
    border-radius: 50%;
    background: #ccc;
}
.ptabs {
    flex: none;
    display: flex;
    height: 26px;
    border-bottom: 1px solid #a0a0a0;
}
.ptabs button {
    width: 40px;
    background: #d2d2d2;
    border-top: 1px solid #808080;
    border-right: 1px solid #808080;
}
.ptabs .on {
    width: 37px;
    background: #f7f7f7;
}
.ptabs .more {
    width: 16px;
    margin-left: auto;
    border: 0;
    background: none;
}
.ptabs .more svg {
    width: 10px;
    height: 12px;
}
.filter {
    height: 26px;
    padding-left: 1px;
    border: 1px solid #c0c0c0;
    justify-content: flex-start;
}
.filter .car {
    width: 5px;
    height: 3px;
    margin-top: 8px;
}
.tree {
    flex: none;
    margin: 0;
    padding: 0;
    list-style: none;
    overflow: hidden;
    border-bottom: 2px solid #2f86c0;
    box-shadow: 0 1px #1c1c80;
    font-family: "DejaVu Sans Condensed", "Noto Sans CJK SC", sans-serif;
    font-size: 12px;
}
.tree li {
    display: flex;
    align-items: center;
    height: 22px;
    padding-left: 21px;
    white-space: nowrap;
}
.tree svg {
    margin-right: 4px;
}
.tree .root {
    padding-left: 0;
}
.tree .root svg {
    margin-right: 2px;
}
.tree .sub {
    padding-left: 5px;
}
.tree .sub::before {
    content: "";
    margin-right: 12px;
    border: 4px solid transparent;
    border-left-color: #555;
    border-right: 0;
}
.hbar {
    flex: none;
    display: flex;
    gap: 3px;
    height: 9px;
    margin-top: auto;
    overflow: hidden;
    background: #f0f0f0;
}
.hbar svg {
    width: 10px;
    height: 12px;
}
.hbar i {
    flex: 1;
    margin-right: 19px;
    background: #ccc;
}

/* graphics area */
.viewport {
    grid-area: 1 / 2 / 3 / 3;
    position: relative;
    overflow: hidden;
    background: #fff;
    border-right: 1px solid #000;
}
.viewbar {
    display: grid;
    grid-template-columns: 1fr auto 1fr;
    align-items: center;
    height: 30px;
    padding-right: 5px;
}
.hud {
    grid-column: 2;
    display: flex;
}
.hud button {
    width: 26px;
}
.hud .arrow {
    width: 14px;
    color: #888;
}
.docbtns {
    justify-self: end;
    color: #999;
}
.handle {
    position: absolute;
    left: -1px;
    top: 410px;
    width: 9px;
    height: 38px;
    background: #f7f7f7;
    border: 1px solid #808080;
    border-left: 0;
}
.model {
    position: absolute;
    left: 299px;
    top: 244px;
    width: 520px;
    height: 330px;
}
.triad {
    position: absolute;
    left: 4px;
    bottom: 39px;
    width: 46px;
    height: 54px;
    font-family: "Liberation Serif", serif;
    font-size: 11px;
}
.viewname {
    position: absolute;
    left: 12px;
    bottom: -6px;
    font-family: "Liberation Mono", "Noto Sans CJK SC", monospace;
    font-weight: bold;
}
.taskpane {
    position: absolute;
    top: 58px;
    right: 0;
    border: 1px solid #808080;
    border-right: 0;
}
.taskpane button {
    width: 24px;
    height: 24px;
    background: #d2d2d2;
    border-bottom: 1px solid #808080;
}
.taskpane button:last-child {
    border-bottom: 0;
}
.taskpane .on {
    background: #f7f7f7;
}
.taskpane svg {
    width: 18px;
    height: 18px;
}
.watermark {
    position: absolute;
    right: 90px;
    bottom: 5px;
    color: #bcbcbc;
    font-size: 15px;
    line-height: 24px;
    width: 198px;
    white-space: nowrap;
}
.watermark p {
    margin: 0;
}
.watermark .big {
    font-size: 20px;
}
.thumb {
    position: absolute;
    right: 3px;
    bottom: 0;
    width: 6px;
    height: 17px;
    border: 1px solid #444c55;
    border-bottom: 0;
    border-radius: 3px 3px 0 0;
    background: #707c88;
}
```
